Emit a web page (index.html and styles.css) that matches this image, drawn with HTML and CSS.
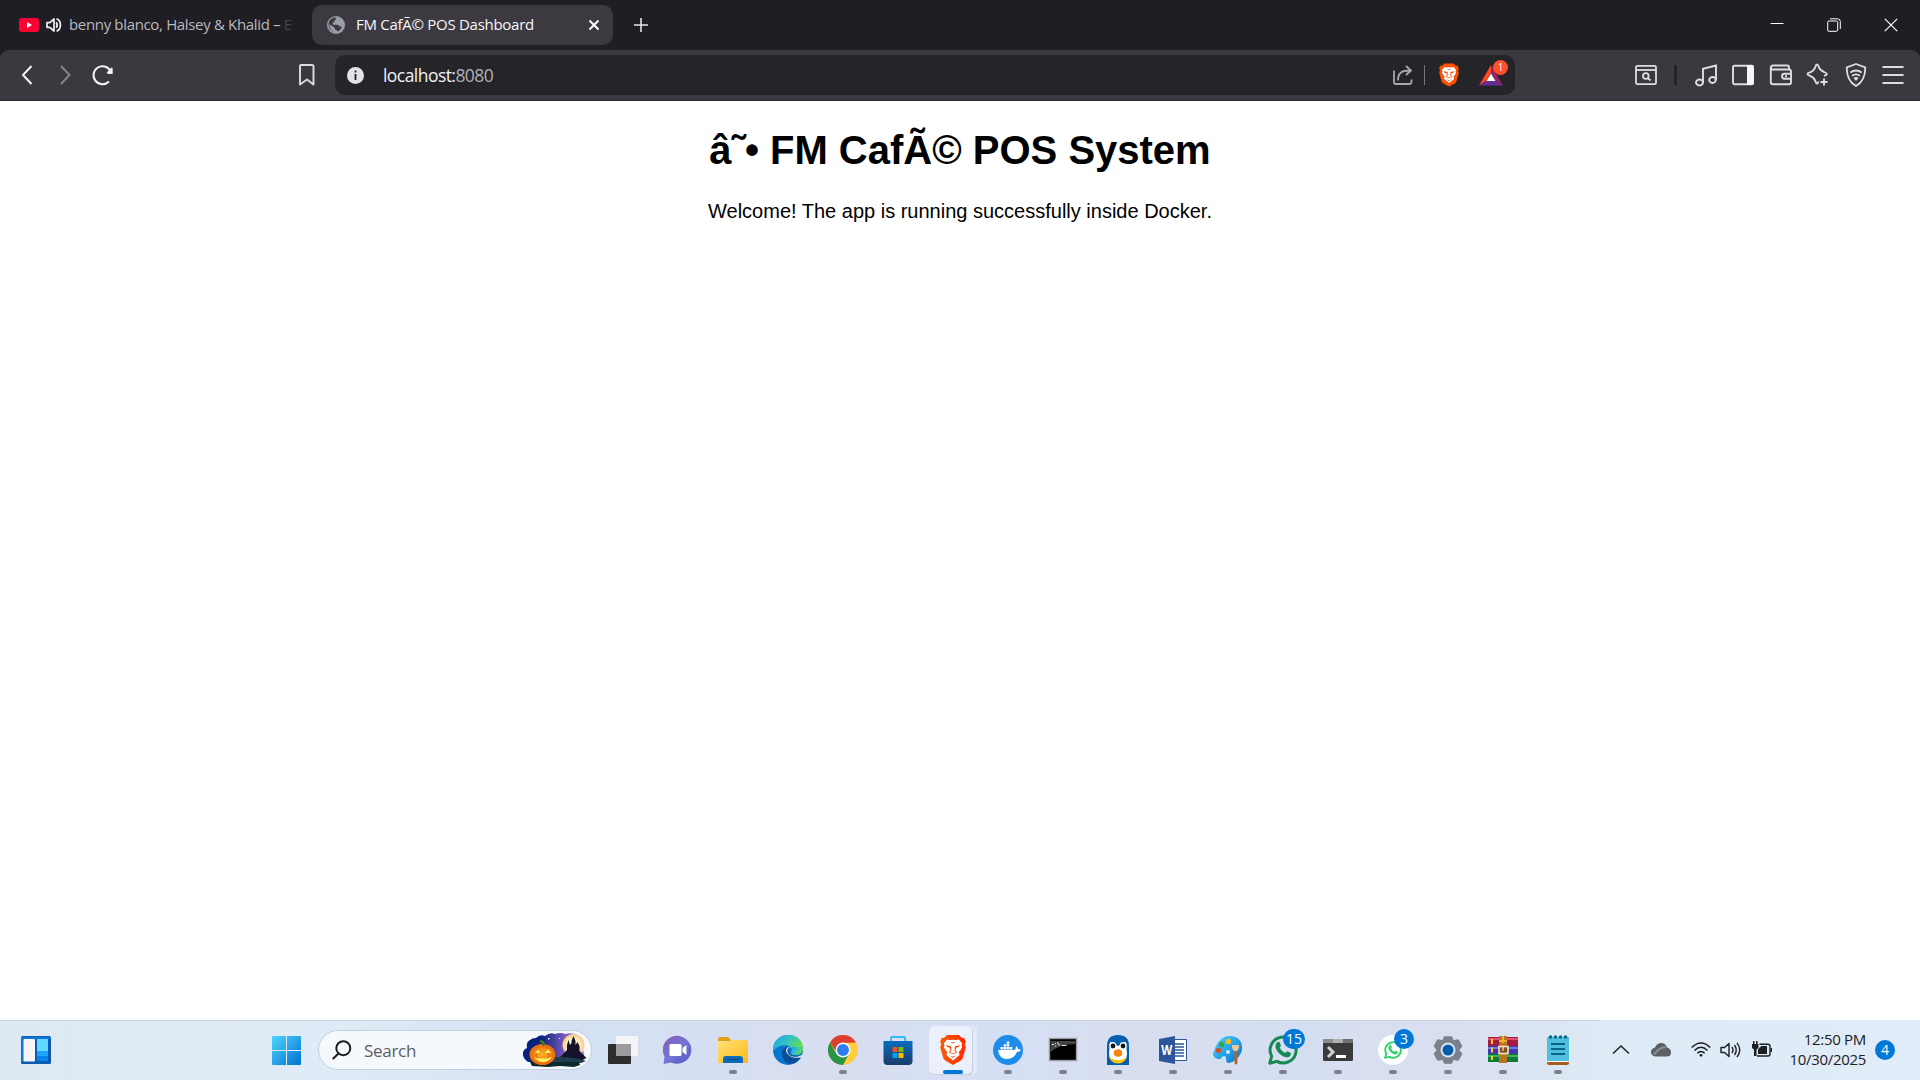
FILE: index.html
```html
<!DOCTYPE html>
<html lang="en">
<head>
<meta charset="utf-8">
<title>FM CafÃ© POS Dashboard</title>
<link rel="stylesheet" href="styles.css">
</head>
<body>
<svg class="defs" width="0" height="0" aria-hidden="true">
  <defs>
    <linearGradient id="blue" x1="0" y1="0" x2="1" y2="1"><stop offset="0" stop-color="#4fd6ff"/><stop offset="1" stop-color="#0070d0"/></linearGradient>
    <linearGradient id="brave" x1="0" x2="1"><stop offset="0" stop-color="#ff5a00"/><stop offset="1" stop-color="#ff2a00"/></linearGradient>
    <symbol id="lion" viewBox="0 0 26 30">
      <path d="M7 0h12l3 3 2-.3 1.800 4-1 2.600 1 3-3 10.500q-.5 1.700-2 2.800L13 30l-7.800-4.400q-1.500-1.100-2-2.800L.2 12.300l1-3L.2 6.700 2 2.700 4 3z"/>
      <path fill="#fff" d="M7 4.500l3 .6 3-.4 3 .4 3-.6 3.200 4-.8 2 .8 1-1.200 3-2.200 2.600.8 3-3.200 2.600L13 25.500l-3.400-2.800L6.400 20l.8-3L5 14.500l-1.200-3 .8-1-.8-2z"/>
      <path fill="#ff4000" d="M6 10.200l5 1 .4 4-1.400 2 3 1.200 3-1.200-1.400-2 .4-4 5-1-1.300 1.900-2.700.6-.3 2.500 1.500 2.200-4.200 1.900-4.200-1.900 1.500-2.200-.3-2.500-2.700-.6zM10.500 6.800l2.500.7 2.500-.7-1.500 1.500h-2zM10 20.500l3 1.200 3-1.200-3 2.600z"/>
    </symbol>
    <symbol id="phone" viewBox="0 0 30 30">
      <path fill="none" stroke="currentColor" stroke-width="3" stroke-linejoin="round" d="M1.800 28.200l1.900-7A13 13 0 1 1 8.900 26.400z"/>
      <path fill="currentColor" d="M9 7.500c1-1 2.300-.9 2.700.1l1.200 2.800c.2.600-.9 1.800-1.200 2.200 1.200 2.400 3 4.200 5.600 5.400.5-.4 1.600-2 2.200-1.700l2.900 1.400c1.300.8.2 4.600-3.400 4.600C13.700 22.300 7.500 16 7.500 11.200c0-1.600.6-2.800 1.500-3.700z"/>
    </symbol>
  </defs>
</svg>

<div class="screen">
  <header class="tabs">
    <div class="tab tab-idle">
      <svg width="20" height="14" viewBox="0 0 20 14"><rect width="20" height="14" rx="3" fill="#ff0033"/><path fill="#fff" d="M8 4l5 3-5 3z"/></svg>
      <svg class="sound" width="16" height="16" viewBox="0 0 16 16" fill="none" stroke="#f1f0f3" stroke-width="1.700"><path d="M1 5.700h2.800L8 2v12l-4.200-3.700H1z" stroke-linejoin="round"/><path d="M10.200 5.200q2 2.800 0 5.600M10.500 1.800c5.200 2 5.200 10.400 0 12.400"/></svg>
      <span class="tab-text">benny blanco, Halsey &amp; Khalid – <span class="fading">E</span></span>
    </div>
    <div class="tab tab-active">
      <svg width="18" height="18" viewBox="0 0 18 18"><circle cx="9" cy="9" r="9" fill="#9aa0a6"/><path fill="#3c3a40" d="M10 1.800c-1.800 0-1.500 1.500-1.200 2.200H7.500v2.200H5.800v2.500h4.800c1.200 0 1.300 1.600 2.600 1.700h1.600c-.5 3-2.500 4.800-5 5.100V14c-2 0-2.300-1-2.300-2.500L2.300 8.200C2.600 12 4 15 8 16.400 2 15 .4 9 2.400 5 4 2.500 7 1 10 1.800z"/></svg>
      <span class="tab-text">FM CafÃ© POS Dashboard</span>
      <svg class="tab-close" width="12" height="12" viewBox="0 0 12 12" stroke="#fff" stroke-width="2"><path d="M1.500 1.500l9 9M10.500 1.500l-9 9"/></svg>
    </div>
    <svg class="plus" width="14" height="14" viewBox="0 0 14 14" stroke="#e4e3e7" stroke-width="1.600"><path d="M7 0v14M0 7h14"/></svg>
    <div class="window-buttons">
      <svg width="14" height="14" viewBox="0 0 14 14"><path d="M.5 5.500h13" stroke="#fff"/></svg>
      <svg width="14" height="14" viewBox="0 0 14 14" fill="none" stroke="#fff"><rect x=".7" y="3" width="10" height="10.300" rx="1.200"/><path d="M3 .8h7.500q2.800 0 2.800 2.800V11"/></svg>
      <svg width="14" height="14" viewBox="0 0 14 14" stroke="#fff" stroke-width="1.200"><path d="M.8.800l12.400 12.400M13.200.8L.8 13.200"/></svg>
    </div>
  </header>

  <nav class="toolbar">
    <div class="nav-icons">
      <svg width="24" height="24" viewBox="0 0 24 24" fill="none" stroke="#f4f3f6" stroke-width="2"><path d="M16.500 3L8 12l8.500 9"/></svg>
      <svg width="24" height="24" viewBox="0 0 24 24" fill="none" stroke="#85838a" stroke-width="2"><path d="M8 3l8.500 9L8 21"/></svg>
      <svg width="24" height="24" viewBox="0 0 24 24" fill="none" stroke="#f4f3f6" stroke-width="2"><path d="M18 18.500A9 9 0 1 1 19.500 8"/><path fill="#f4f3f6" stroke="none" d="M20.500 4.500l1.200 1v5.500h-4.500l-1.700-1.200z"/></svg>
    </div>
    <svg width="24" height="24" viewBox="0 0 24 24" fill="none" stroke="#dedde2" stroke-width="1.900"><path d="M5 3q0-1 1-1h11q1.500 0 1.500 1v18.500L12 16.500 5 21.500z" stroke-linejoin="round"/></svg>
    <div class="address">
      <svg width="17" height="17" viewBox="0 0 17 17"><circle cx="8.500" cy="8.500" r="8.500" fill="#e4e3e9"/><path d="M8.500 7v6M8.500 3.600v2" stroke="#28262c" stroke-width="1.900"/></svg>
      <span class="url">localhost:<span class="port">8080</span></span>
      <svg class="share" width="22" height="22" viewBox="0 0 22 22" fill="none" stroke="#a9a7ae" stroke-width="1.800"><path d="M2 6.500V18q0 2 2 2h13q2.500 0 2.500-2v-2.500"/><path d="M6 16.500C6 9 9 6.500 18.500 6.500M14 2l5 4.500-5 4.500"/></svg>
      <i class="bar"></i>
      <svg class="shield" width="20" height="24" fill="#ff5000"><use href="#lion"/></svg>
      <div class="rewards">
        <svg width="24" height="21" viewBox="0 0 24 21"><path fill="#ff4724" d="M12 0v8L7.500 15.500 0 20.500z"/><path fill="#9e1f63" d="M12 0l12 20.500-7.500-5L12 8z"/><path fill="#662d91" d="M0 20.500l7.500-5h9l7.500 5z"/><path fill="#fff" d="M12 8.500l4.500 7.500h-9z"/></svg>
        <b>1</b>
      </div>
    </div>
    <div class="extras">
      <svg width="24" height="24" viewBox="0 0 24 24" fill="none" stroke="#dedde2" stroke-width="1.800"><rect x="2" y="2.800" width="20" height="18.400" rx="1.500"/><path d="M2 7h20"/><circle cx="11.800" cy="13" r="2.800"/><path d="M14 15.300l2.500 2.200"/></svg>
      <i class="bar dark"></i>
      <div class="extra-row">
        <svg width="24" height="24" viewBox="0 0 24 24" fill="none" stroke="#dedde2" stroke-width="1.900"><ellipse cx="5.500" cy="19.500" rx="3.500" ry="3"/><ellipse cx="18.500" cy="17" rx="3.300" ry="3"/><path d="M9 19.500V5.800l13-3.300V17"/></svg>
        <svg width="24" height="24" viewBox="0 0 24 24"><rect x="2" y="2.800" width="20" height="18.400" rx="1.500" fill="none" stroke="#dedde2" stroke-width="1.900"/><path fill="#f6f5f8" d="M16 2h5q1.800 0 1.800 1.800v16.400q0 1.800-1.800 1.800h-5z"/></svg>
        <svg width="24" height="24" viewBox="0 0 24 24" fill="none" stroke="#dedde2" stroke-width="1.900"><path d="M20 6.500V4q0-1.500-1.500-1.500H4Q1.800 2.500 1.800 5v14q0 2.300 2.300 2.300H20q2 0 2-2V8.500q0-2-2-2H4q-2.200 0-2.200-1.800"/><path d="M22 10.800h-6.500q-2.500 0-2.500 2.500t2.500 2.500H22M16 13.300h2"/></svg>
        <svg width="24" height="24" viewBox="0 0 24 24" fill="none" stroke="#dedde2" stroke-width="1.900" stroke-linejoin="round"><path d="M18 13q3-1.300 3-2t-3-2q-4-1.500-5.200-5Q12 1.500 11 1.500T9.300 4Q8 8 4 9.300 1.500 10 1.500 11T4 12.800q4 1.500 5.300 5.200.7 2.500 1.700 2.500t1.500-2"/><path d="M18 15.500v7M14.500 19h7"/></svg>
        <svg width="24" height="24" viewBox="0 0 24 24" fill="none" stroke="#dedde2" stroke-width="1.800"><path d="M12 1l9.200 3.400q.4 13-9.200 18.600-9.600-5.600-9.200-18.600z" stroke-linejoin="round"/><path d="M6.300 9.500q5.700-4 11.400 0M8 12.800q4-3 8 0"/><path fill="#dedde2" stroke="none" d="M9.500 15q2.500-2 5 0L12 18z"/></svg>
        <svg width="24" height="24" viewBox="0 0 24 24" stroke="#dedde2" stroke-width="1.800"><path d="M1.500 4h21M1.500 12h21M1.500 20h21"/></svg>
      </div>
    </div>
  </nav>

  <main class="page">
    <h1>â˜• FM CafÃ© POS System</h1>
    <p>Welcome! The app is running successfully inside Docker.</p>
  </main>

  <footer class="taskbar">
    <svg class="widgets" width="30" height="28" viewBox="0 0 30 28"><rect width="30" height="28" rx="1.500" fill="#0b5cb0"/><path fill="#0a78d5" d="M0 1h30v2H3v23H0z"/><rect x="2.500" y="3" width="11.500" height="22.500" rx="1" fill="#f5f5f7"/><path fill="#61d8ff" d="M16 3h11v12H16z"/><path fill="#1ba4fa" d="M16 15h11v5H16z"/><path fill="#0883ee" d="M16 20h11v5H16z"/></svg>
    <svg class="start" width="29" height="29" viewBox="0 0 29 29" fill="url(#blue)"><path d="M1 0h13v14H0V1q0-1 1-1zM15 0h13q1 0 1 1v13H15zM0 15h14v14H1q-1 0-1-1zM15 15h14v13q0 1-1 1H15z"/></svg>
    <div class="search">
      <svg width="20" height="20" viewBox="0 0 20 20" fill="none" stroke="#1d1d1f" stroke-width="2"><circle cx="11.300" cy="8.200" r="7"/><path d="M6.500 13.500L1.300 18.500" stroke-linecap="round"/></svg>
      <span>Search</span>
      <svg class="halloween" width="66" height="34" viewBox="0 0 66 34">
        <defs><linearGradient id="night"><stop offset=".3" stop-color="#07237d"/><stop offset=".65" stop-color="#7255b9"/><stop offset="1" stop-color="#b274ca"/></linearGradient><radialGradient id="pumpkin"><stop offset="0" stop-color="#ffb52c"/><stop offset="1" stop-color="#ec6704"/></radialGradient><radialGradient id="moon"><stop offset=".5" stop-color="#fff2c4"/><stop offset="1" stop-color="#f5c98e"/></radialGradient></defs>
        <path fill="url(#night)" d="M5 29Q-1 25 0 19q1-3 4-4-1-6 3-8 2-2 6-2 4-4 9-2 5-4 10-2 6-2 10 0 9-2 14 2 3 4 1 9 5 7 4 13-3 4-6 4z"/>
        <circle cx="50.500" cy="12" r="11" fill="url(#moon)"/>
        <path fill="#15132b" d="M35 26l9-9v-5l1.500-5 1.500 5 1.500-2V8l2-5 2 5v4l2-3 2 4v5l7 7-6 3z"/>
        <path fill="#1d3e4f" d="M3 27q12-3 32-3 18 0 28 4l-5 2z"/>
        <path fill="#0c2a2a" d="M7 29h49l1 3-6 2-14-1-12 1-16-1z"/>
        <ellipse cx="19.500" cy="21.500" rx="13" ry="10.500" fill="url(#pumpkin)"/><path d="M16 11.500q-6 10 0 20M23 11.500q6 10 0 20" stroke="#df6507" fill="none"/>
        <path d="M20 13q2-4-3-5" stroke="#51752c" stroke-width="2.500" fill="none"/>
        <path fill="#ffef66" d="M12 20l3-4 2 4zM22 20l3-4 3 4zM11 24l4 1.500h9l5-1.500q-3 5-9 5t-9-5z"/>
        <path fill="#fff" d="M25 5h1.500v1.500H25zM36 5h1v1h-1z"/>
      </svg>
    </div>
    <div class="apps">
      <div class="app"><svg width="30" height="30" viewBox="0 0 30 30"><rect y="9" width="23" height="20" rx="1" fill="#2e2d2d"/><path fill="#f5f5f6" d="M8 1h22v20H8z"/><path fill="#9b9b9d" d="M8 9h15v12H8z"/></svg></div>
      <div class="app"><svg width="30" height="30" viewBox="0 0 30 30"><defs><linearGradient id="chat" x2="1" y2="1"><stop stop-color="#8a59b2"/><stop offset=".5" stop-color="#7674d3"/><stop offset="1" stop-color="#5158c4"/></linearGradient></defs><path fill="url(#chat)" d="M.5 29l1-7.500A14.300 14 0 1 1 8 27.500z"/><rect x="6.500" y="9" width="12" height="12" rx="1.500" fill="#fff"/><path fill="#fff" d="M19.500 13l4-3v10l-4-3z"/></svg></div>
      <div class="app running"><svg width="30" height="30" viewBox="0 0 30 30"><defs><linearGradient id="folder" x2="1" y2="1"><stop stop-color="#ffe078"/><stop offset="1" stop-color="#fdb915"/></linearGradient></defs><path fill="#dfa20b" d="M0 4q0-2 2-2h8l4 4H0z"/><path fill="url(#folder)" d="M0 6.500h10L14 5h16v23H0z"/><path fill="#0b6cba" d="M5 28v-4q0-3 3-3h14q3 0 3 3v4z"/><path stroke="#064984" stroke-width="1.500" d="M9 24.500h12"/></svg></div>
      <div class="app"><svg width="30" height="30" viewBox="0 0 30 30"><defs><linearGradient id="edgeTop" y2=".5"><stop stop-color="#1aa0e8"/><stop offset=".5" stop-color="#35c1c4"/><stop offset="1" stop-color="#63e040"/></linearGradient></defs><circle cx="15" cy="15" r="15" fill="#0876cf"/><path fill="url(#edgeTop)" d="M0 13C2-4 29-5 30 13c0 6-5 8-10 6.500-3-1-1-2.500-1-5C19 10 8 7 0 16z"/><path fill="#0c4f98" d="M9 17c1-5 6-6 8-5-4 3-1 11 12 8.500C24 31 9 33 9 17z"/><path fill="#d9dff2" d="M18.500 12c-5 0-5 5-2 8 4 3 10 2 14-1.500V24l-3-1.500c-5 1-13-.5-14.500-6.500-.5-3 3-5 5.500-4z"/><path fill="url(#edgeTop)" d="M19 19.500c-2-1 1-2.500-.5-7.500L30 12c0 8-7 9-11 7.500z"/></svg></div>
      <div class="app running"><svg width="30" height="30" viewBox="0 0 30 30"><circle cx="15" cy="15" r="15" fill="#ffcd3e"/><path fill="#df3f32" d="M2 7.500A15 15 0 0 1 28 7.500L15 8 9 18z"/><path fill="#279447" d="M2 7.500L8.500 19 15 22l6-3-6 11A15 15 0 0 1 2 7.500z"/><circle cx="15" cy="15" r="7.500" fill="#fff"/><circle cx="15" cy="15" r="6" fill="#2e7cf0"/></svg></div>
      <div class="app"><svg width="30" height="30" viewBox="0 0 30 30"><defs><linearGradient id="store" y2="1" x2="0"><stop stop-color="#076bbd"/><stop offset="1" stop-color="#1b3d6c"/></linearGradient></defs><path d="M8 7V3q0-1 1-1h12q1 0 1 1v4" fill="none" stroke="#31bdf5" stroke-width="2"/><path fill="url(#store)" d="M.5 6h29v20q0 4-4 4h-21q-4 0-4-4z"/><path fill="#f25022" d="M9.500 12h5v5h-5z"/><path fill="#7fba00" d="M15.500 12h5v5h-5z"/><path fill="#00a4ef" d="M9.500 18h5v5h-5z"/><path fill="#ffb900" d="M15.500 18h5v5h-5z"/></svg></div>
      <div class="app current"><svg width="26" height="30" fill="url(#brave)"><use href="#lion"/></svg></div>
      <div class="app running"><svg width="30" height="30" viewBox="0 0 30 30"><circle cx="15" cy="15" r="15" fill="#1d8ceb"/><path fill="#fff" d="M5 15h16q2 0 2-4 2 1 2 3l3 .5q-1 2.500-4 2.500-3 7-10 7-8 0-9-9zM7.500 12h2.800v2.500H7.500zM10.700 12h2.600v2.500h-2.600zM13.700 12h2.600v2.500h-2.600zM16.700 12h2.600v2.500h-2.600zM10.700 9.200h2.600v2.400h-2.600zM13.700 9.200h2.600v2.400h-2.600zM13.700 6.500h2.600v2.300h-2.600z"/></svg></div>
      <div class="app running"><svg width="30" height="30" viewBox="0 0 30 30"><rect x="1.500" y="3.500" width="27" height="22" fill="#000" stroke="#9a9b9e" stroke-width="1.400"/><path fill="#444" d="M2.500 6h25v3Q12 9 2.500 17z"/><path d="M4 9.500h2M7.500 8v1M7.500 10.500v1M9.500 7.500l2 3M13.500 10.500h5" stroke="#ddd" stroke-width="1.200"/></svg></div>
      <div class="app running"><svg width="30" height="30" viewBox="0 0 30 30"><path fill="#055fae" d="M4 30V11Q4 0 15 0t11 11v19z"/><path fill="#fff" d="M6 19l1-12 8 4 8-4 1 12q0 8-9 8t-9-8z"/><path fill="#ffc20d" d="M6 20q1 5 9 5t9-5q-1 8.500-9 8.500T6 20z"/><circle cx="9.800" cy="10.500" r="3.500" fill="#fff"/><circle cx="20.200" cy="10.500" r="3.500" fill="#fff"/><circle cx="10" cy="11" r="2.400" fill="#161718"/><circle cx="20" cy="11" r="2.400" fill="#161718"/><ellipse cx="15" cy="18" rx="4.300" ry="3.800" fill="#f98414"/></svg></div>
      <div class="app running"><svg class="word" width="30" height="30" viewBox="0 0 30 30"><path fill="#fff" stroke="#2b579a" d="M15 4.500h13.500v21H15z"/><path d="M17 9h9M17 12h9M17 15h9M17 18h9M17 21h9" stroke="#2b579a" stroke-width="1.500"/><path fill="#2b579a" d="M1 4l16-3v28L1 26z"/><text x="3.200" y="20" textLength="11" lengthAdjust="spacingAndGlyphs">W</text></svg></div>
      <div class="app running"><svg width="30" height="30" viewBox="0 0 30 30"><path fill="url(#blue)" d="M17 1C28 1 31 11 28 18q-4 8-12 10c-5 0-1-7-5-7-3 0-2 4-6 3-5-1-6-5-4-8 3-9 8-15 16-15z"/><circle cx="8.500" cy="9.500" r="2.700" fill="#3ca53f"/><circle cx="15.500" cy="6.500" r="2.700" fill="#f5bc20"/><circle cx="5.500" cy="15.500" r="2.700" fill="#cd502c"/><circle cx="15" cy="17" r="2" fill="#d5efff"/><path fill="#b7642c" d="M21.500 14h2.500l.5 14q-1.500 3-3 0z"/><path fill="#ebc59c" d="M19 10h7v3l-2 3h-3l-2-3z"/></svg></div>
      <div class="app running"><svg class="wa" width="30" height="30"><use href="#phone"/></svg><b class="count wide">15</b></div>
      <div class="app running"><svg width="30" height="30" viewBox="0 0 30 30"><rect y="4" width="30" height="22" rx="1.500" fill="#3a3a3a"/><path fill="#8c8c8c" d="M0 8V5q0-1 1-1h9v4z"/><path fill="#b0b0b0" d="M10 4h10v4H10z"/><path fill="#707070" d="M20 4h9q1 0 1 1v3H20z"/><path d="M5 12l5 5-5 5" fill="none" stroke="#d1d1d1" stroke-width="3"/><path fill="#fff" d="M13 20h10v3H13z"/></svg></div>
      <div class="app running"><svg width="30" height="30" viewBox="0 0 30 30"><circle cx="15" cy="15" r="15" fill="#fff"/><svg class="wa-light" x="6" y="6" width="18" height="18"><use href="#phone"/></svg></svg><b class="count">3</b></div>
      <div class="app running"><svg width="30" height="30" viewBox="0 0 30 30"><path fill="#79828b" stroke="#79828b" stroke-width="1.500" stroke-linejoin="round" d="M11.500 2h7l1.500 4 5-1 3.500 6-3 4 3 4-3.500 6-5-1-1.500 4h-7L10 24l-5 1-3.500-6 3-4-3-4L5 5l5 1z"/><circle cx="15" cy="15" r="7.500" fill="#dce5ed"/><circle cx="15" cy="15" r="5.500" fill="#075db0"/></svg></div>
      <div class="app running"><svg width="30" height="30" viewBox="0 0 30 30"><path fill="#a31c41" d="M0 2h30v9H0z"/><path fill="#e0506f" d="M0 3h30v2H0z"/><path fill="#4039a9" d="M0 11h30v8H0z"/><path fill="#7874dc" d="M0 12h30v2H0z"/><path fill="#107a38" d="M0 19h30v8H0z"/><path fill="#35b755" d="M0 20h30v2H0z"/><path fill="#fcc928" d="M3 4h2v5H3zM3 12.500h2v5H3zM3 21h2v4H3z"/><path fill="#b87323" d="M11 1h8v27h-8z"/><path fill="#e8b52f" d="M11 5h8v2h-8zM14 1h2v7h-2z"/><rect x="11" y="11.500" width="9" height="7" fill="#865018" stroke="#f3e7c6" stroke-width="1.600"/><path d="M15 12v4" stroke="#fff"/></svg></div>
      <div class="app running"><svg width="30" height="30" viewBox="0 0 30 30"><path fill="#a8591d" d="M4 25h22v3q0 2-2 2H6q-2 0-2-2z"/><path fill="#fff" d="M4 24h22v3H4z"/><path fill="#4ebfdd" d="M4 2h22v24H4z"/><path d="M8 9h14M8 14h14M8 19h14" stroke="#07658a" stroke-width="1.800"/><g fill="#086989"><circle cx="7.500" cy="2" r="1.800"/><circle cx="12.500" cy="2" r="1.800"/><circle cx="17.500" cy="2" r="1.800"/><circle cx="22.500" cy="2" r="1.800"/></g></svg></div>
    </div>
    <div class="tray">
      <svg width="18" height="20" viewBox="0 0 18 20" fill="none" stroke="#1d2023" stroke-width="1.500"><path d="M1 13.500L9 6l8 7.500"/></svg>
      <svg class="cloud" width="22" height="20" viewBox="0 0 22 20"><path fill="#5d6064" d="M5 16.500Q1 15.500 1 12q0-3.500 4-4.500 2-5 7-4.500 4 .5 5 4.500 4 1 4 5t-4 4z"/><path d="M4 14.500q7-9 12-7" stroke="#8d9093" stroke-width="2" fill="none"/></svg>
      <svg class="wifi" width="20" height="20" viewBox="0 0 20 20" fill="none" stroke="#1d2023" stroke-width="1.500"><path d="M.7 7.500q9.300-9 18.600 0M3.500 10.500q6.500-6.500 13 0M6.300 13.300q3.700-3.600 7.400 0"/><circle cx="10" cy="15.300" r="1.400" fill="#1d2023" stroke="none"/></svg>
      <svg class="volume" width="22" height="20" viewBox="0 0 22 20" fill="none" stroke="#1d2023" stroke-width="1.400"><path d="M1 7.500h3.500L9 3.500v13l-4.500-4H1z" stroke-linejoin="round"/><path d="M12 7q2 3 0 6M14.500 5q3.500 5 0 10M17 2.800q5.500 7.200 0 14.400"/></svg>
      <svg class="battery" width="22" height="20" viewBox="0 0 22 20"><path fill="#1d2023" d="M1 4h1V1h1.500v3H5V1h1.500v3h1v4L5.500 9.500V16H3V9.500L1 8zM8 8q2-1 2-2h6v8H7v-4zM19.500 8H21v4h-1.500z"/><path d="M8.500 4.200H17q2 0 2 2V14q0 2-2 2H6" fill="none" stroke="#1d2023" stroke-width="1.400"/></svg>
      <div class="clock"><span class="time">12:50 PM</span><span class="date">10/30/2025</span></div>
      <b class="notices">4</b>
    </div>
  </footer>
</div>
</body>
</html>
```
FILE: styles.css
```css
* { box-sizing: border-box; }
body { margin: 0; overflow: hidden; font-family: "Open Sans", "Noto Sans", sans-serif; }
svg { display: block; flex: none; }
.defs { position: absolute; }
.screen { width: 1920px; height: 1080px; display: flex; flex-direction: column; background: #1f1e24; }

.tabs { height: 50px; flex: none; display: flex; align-items: center; }
.tab { display: flex; align-items: center; height: 40px; }
.tab-text { white-space: nowrap; font-size: 15px; line-height: 20px; padding-bottom: 2px; }
.tab-idle { width: 293px; padding-left: 19px; color: #bab9be; margin-right: 19px; }
.tab-idle .sound { margin: 0 7px; }
.tab-idle .tab-text { letter-spacing: -.34px; }
.fading { color: #45444a; }
.tab-active { width: 301px; background: #3c3a40; border-radius: 10px; padding: 0 13px 0 15px; color: #f7f6f9; }
.tab-active .tab-text { margin-left: 11px; letter-spacing: -.28px; }
.tab-close { margin-left: auto; }
.plus { margin-left: 21px; }
.window-buttons { margin-left: auto; display: flex; gap: 43px; padding-right: 22px; }

.toolbar { height: 51px; flex: none; display: flex; align-items: center; background: #3b393f; border-bottom: 1px solid #2b2930; border-radius: 9px 9px 0 0; padding-left: 15px; }
.nav-icons { display: flex; gap: 14px; width: 280px; }
.address { margin-left: 16px; width: 1180px; height: 40px; background: #252429; border-radius: 10px; display: flex; align-items: center; padding-left: 11.500px; }
.url { margin-left: 19.500px; font-size: 17.500px; line-height: 24px; letter-spacing: -.55px; color: #f1f0f4; padding-bottom: 1px; }
.port { color: #b2b0b6; }
.share { margin-left: auto; }
.bar { width: 1px; height: 20px; background: #77757b; margin: 0 14px 0 10px; }
.rewards { position: relative; margin: 0 12px 0 20px; }
.rewards b { position: absolute; left: 14px; top: -5px; width: 15px; height: 15px; border-radius: 50%; background: #ff5027; color: #fff; font-weight: 400; font-size: 10px; line-height: 15px; text-align: center; }
.extras { margin-left: 119px; display: flex; align-items: center; }
.bar.dark { width: 3px; background: #252329; margin: 0 17px 0 16px; }
.extra-row { display: flex; gap: 13.400px; }

.page { flex: 1; overflow: hidden; background: #fff; font-family: "Liberation Sans", Arial, sans-serif; color: #000; text-align: center; }
.page h1 { font-size: 40px; line-height: 46px; margin: 26px 0 27px; }
.page p { font-size: 20px; line-height: 23px; margin: 0; }

.taskbar { height: 60px; flex: none; display: flex; align-items: center; background: linear-gradient(#c9d4e3, #c9d4e3) 0 0 / 1601px 1px no-repeat, linear-gradient(90deg, #dfe9f3 0, #dfebf6 17%, #d4e0f3 31%, #d8def0 44%, #d5dff4 52%, #d8deef 60%, #d5def2 67%, #d9dfef 76%, #deebf6 84%, #e0ecf8 100%); }
.widgets { margin-left: 21px; }
.start { margin-left: 221px; }
.search { margin-left: 17px; width: 274px; height: 40px; border: 1px solid #c5d0df; border-radius: 20px; background: #f5f8fd; display: flex; align-items: center; padding-left: 13px; }
.search span { margin-left: 12px; font-size: 17px; color: #5c5e62; letter-spacing: -.3px; }
.halloween { margin-left: auto; margin-right: 2px; }
.apps { display: flex; margin-left: 3px; }
.app { position: relative; width: 55px; height: 60px; display: flex; align-items: center; justify-content: center; }
.running::after { content: ""; position: absolute; left: 23.500px; top: 50px; width: 8px; height: 4px; border-radius: 2px; background: #7d8188; }
.current::before { content: ""; position: absolute; left: 4px; top: 6px; width: 43px; height: 48px; border-radius: 5px; background: #ebf0fa; box-shadow: 1px 1px 1px #c6cee2, 5px 0 0 #e5eaf7; }
.current::after { content: ""; position: absolute; left: 18px; top: 50px; width: 20px; height: 4px; border-radius: 2px; background: #0078d7; }
.current svg { position: relative; }
.word text { font: bold 14px "Open Sans", sans-serif; fill: #fff; }
.wa { color: #17894f; }
.wa-light { color: #2bd366; }
.count { position: absolute; left: 29px; top: 9px; width: 20px; height: 20px; border-radius: 10px; background: #0078d7; color: #fff; font-size: 14px; font-weight: 400; line-height: 19px; text-align: center; }
.count.wide { left: 28px; width: 22px; }
.tray { margin-left: auto; display: flex; align-items: center; padding-right: 25px; }
.cloud { margin-left: 20px; }
.wifi { margin-left: 19px; }
.volume { margin-left: 9px; }
.battery { margin-left: 9px; }
.clock { width: 93px; display: flex; flex-direction: column; align-items: flex-end; font-size: 15px; line-height: 20px; color: #1d2023; letter-spacing: -.3px; padding-bottom: 2px; }
.notices { margin-left: 9px; width: 20px; height: 20px; border-radius: 50%; background: #0078d7; color: #fff; font-size: 14px; font-weight: 400; line-height: 19px; text-align: center; }
```
